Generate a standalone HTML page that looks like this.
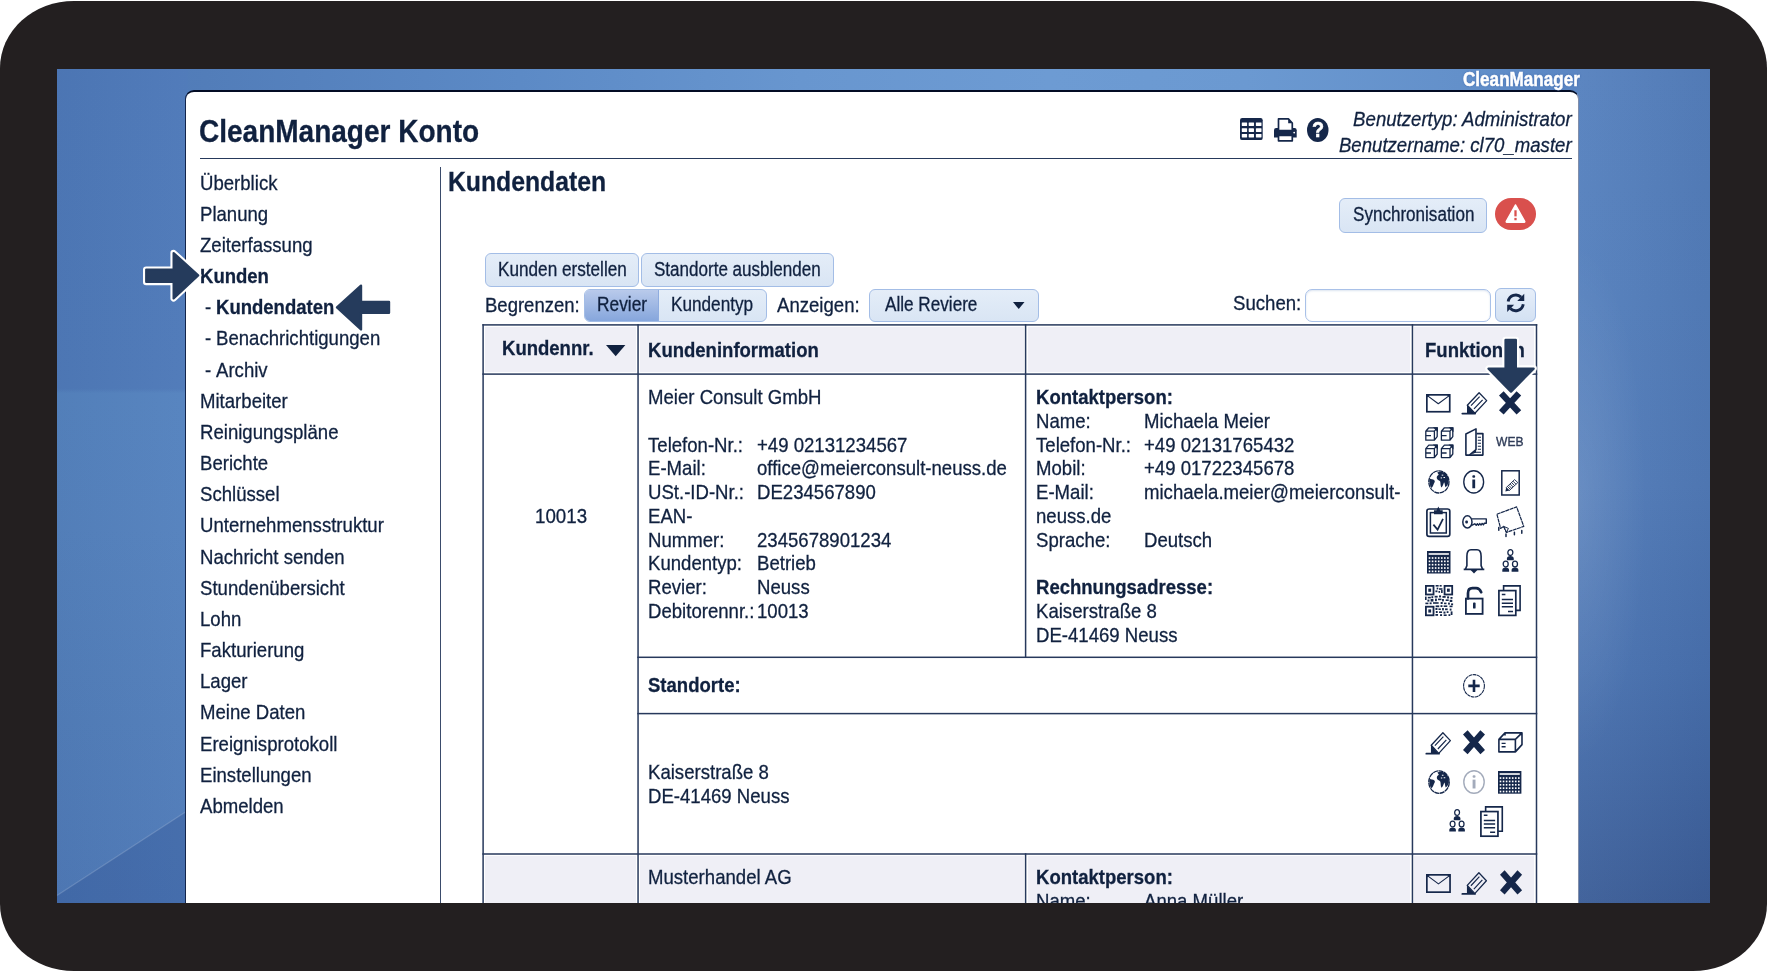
<!DOCTYPE html>
<html lang="de"><head><meta charset="utf-8"><title>CleanManager Konto - Kundendaten</title>
<style>
html,body{margin:0;padding:0;background:#fff}
body{width:1767px;height:971px;overflow:hidden;position:relative;font-family:"Liberation Sans",Arial,Helvetica,sans-serif}
.t{position:absolute;white-space:nowrap;line-height:1;letter-spacing:0;-webkit-text-stroke:.3px currentColor}
#frame{position:absolute;left:0;top:1px;width:1767px;height:970px;background:#231f20;border-radius:74px/67px}
#screen{position:absolute;left:57px;top:69px;width:1653px;height:834px;overflow:hidden;
background:linear-gradient(to right,#4d78b8 0,#527db9 9%,#5c8ac6 28%,#6896cf 45%,#6d9bd3 60%,#6b99d1 72%,#6390ca 85%,#5984c1 93%,#5580be 100%)}
#lstrip{position:absolute;left:57px;top:69px;width:131px;height:834px;background:linear-gradient(to right,rgba(0,0,0,.03),rgba(255,255,255,.02)),linear-gradient(to bottom,#4e79b9 0,#4f7ab9 38.3%,#5583bf 38.9%,#5582be 55%,#527eba 78%,#4f7ab8 100%)}
#rstrip{position:absolute;left:1576px;top:69px;width:134px;height:834px;background:radial-gradient(ellipse 70px 260px at 0 52%,rgba(255,255,255,.10),rgba(255,255,255,0)),linear-gradient(to right,rgba(255,255,255,.03),rgba(0,0,30,.06)),linear-gradient(to bottom,#5782bf 0,#5580bd 28%,#537dba 50%,#4a73b1 72%,#3d5f99 100%)}
#abs{position:absolute;left:-57px;top:-69px;width:1767px;height:971px;will-change:transform}
#panel{position:absolute;left:185px;top:90px;width:1394px;height:900px;box-sizing:border-box;background:#fff;
border-top:2px solid #030c24;border-left:1px solid #13254b;border-right:1px solid rgba(25,50,100,.55);border-radius:9px 9px 0 0}
.btn{position:absolute;box-sizing:border-box;border:1px solid #a3bde6;border-radius:6px;background:linear-gradient(#e4edf8,#d9e5f4)}
</style></head><body>
<div id="frame"></div>
<div id="screen"><div id="abs">
<div id="lstrip"></div><div id="rstrip"></div>
<svg style="position:absolute;left:57px;top:780px" width="130" height="124" viewBox="57 780 130 124"><path d="M57 895.5 L187 811 V904 H57 Z" fill="rgba(22,52,118,.20)"/><path d="M57 895.5 L187 811" stroke="rgba(255,255,255,.16)" stroke-width="1.3" fill="none"/></svg>
<div id="panel"></div>
<div class="t" style="left:1462.92px;transform-origin:0 0;top:69.59px;font-size:19.5px;font-weight:700;font-style:normal;color:#fff;transform:scaleX(0.8774);text-shadow:0 0 2px rgba(40,80,160,.9);-webkit-text-stroke:.5px #fff">CleanManager</div>
<div class="t" style="left:199.48px;transform-origin:0 0;top:115.54px;font-size:31.5px;font-weight:700;font-style:normal;color:#10213f;transform:scaleX(0.8892);">CleanManager Konto</div>
<div style="position:absolute;left:200.00px;top:158.00px;width:1371.50px;height:1.10px;box-sizing:border-box;background:#26395b"></div>
<div class="t" style="right:195.13px;transform-origin:100% 0;top:107.92px;font-size:21px;font-weight:400;font-style:italic;color:#10213f;transform:scaleX(0.8860);">Benutzertyp: Administrator</div>
<div class="t" style="right:195.12px;transform-origin:100% 0;top:133.72px;font-size:21px;font-weight:400;font-style:italic;color:#10213f;transform:scaleX(0.8860);">Benutzername: cl70_master</div>
<div style="position:absolute;left:440.00px;top:167.00px;width:1.10px;height:743.00px;box-sizing:border-box;background:#3a4b6b"></div>
<div class="t" style="left:199.60px;transform-origin:0 0;top:171.62px;font-size:21px;font-weight:400;font-style:normal;color:#10213f;transform:scaleX(0.8850);">Überblick</div>
<div class="t" style="left:199.60px;transform-origin:0 0;top:202.78px;font-size:21px;font-weight:400;font-style:normal;color:#10213f;transform:scaleX(0.8850);">Planung</div>
<div class="t" style="left:199.60px;transform-origin:0 0;top:233.94px;font-size:21px;font-weight:400;font-style:normal;color:#10213f;transform:scaleX(0.8850);">Zeiterfassung</div>
<div class="t" style="left:199.60px;transform-origin:0 0;top:265.10px;font-size:21px;font-weight:700;font-style:normal;color:#10213f;transform:scaleX(0.8820);">Kunden</div>
<div class="t" style="left:204.50px;transform-origin:0 0;top:296.26px;font-size:21px;font-weight:400;font-style:normal;color:#10213f;transform:scaleX(0.8850);">-</div>
<div class="t" style="left:215.60px;transform-origin:0 0;top:296.26px;font-size:21px;font-weight:700;font-style:normal;color:#10213f;transform:scaleX(0.8820);">Kundendaten</div>
<div class="t" style="left:204.50px;transform-origin:0 0;top:327.42px;font-size:21px;font-weight:400;font-style:normal;color:#10213f;transform:scaleX(0.8850);">-</div>
<div class="t" style="left:215.60px;transform-origin:0 0;top:327.42px;font-size:21px;font-weight:400;font-style:normal;color:#10213f;transform:scaleX(0.8850);">Benachrichtigungen</div>
<div class="t" style="left:204.50px;transform-origin:0 0;top:358.58px;font-size:21px;font-weight:400;font-style:normal;color:#10213f;transform:scaleX(0.8850);">-</div>
<div class="t" style="left:215.60px;transform-origin:0 0;top:358.58px;font-size:21px;font-weight:400;font-style:normal;color:#10213f;transform:scaleX(0.8850);">Archiv</div>
<div class="t" style="left:199.60px;transform-origin:0 0;top:389.74px;font-size:21px;font-weight:400;font-style:normal;color:#10213f;transform:scaleX(0.8850);">Mitarbeiter</div>
<div class="t" style="left:199.60px;transform-origin:0 0;top:420.90px;font-size:21px;font-weight:400;font-style:normal;color:#10213f;transform:scaleX(0.8850);">Reinigungspläne</div>
<div class="t" style="left:199.60px;transform-origin:0 0;top:452.06px;font-size:21px;font-weight:400;font-style:normal;color:#10213f;transform:scaleX(0.8850);">Berichte</div>
<div class="t" style="left:199.60px;transform-origin:0 0;top:483.22px;font-size:21px;font-weight:400;font-style:normal;color:#10213f;transform:scaleX(0.8850);">Schlüssel</div>
<div class="t" style="left:199.60px;transform-origin:0 0;top:514.38px;font-size:21px;font-weight:400;font-style:normal;color:#10213f;transform:scaleX(0.8850);">Unternehmensstruktur</div>
<div class="t" style="left:199.60px;transform-origin:0 0;top:545.54px;font-size:21px;font-weight:400;font-style:normal;color:#10213f;transform:scaleX(0.8850);">Nachricht senden</div>
<div class="t" style="left:199.60px;transform-origin:0 0;top:576.70px;font-size:21px;font-weight:400;font-style:normal;color:#10213f;transform:scaleX(0.8850);">Stundenübersicht</div>
<div class="t" style="left:199.60px;transform-origin:0 0;top:607.86px;font-size:21px;font-weight:400;font-style:normal;color:#10213f;transform:scaleX(0.8850);">Lohn</div>
<div class="t" style="left:199.60px;transform-origin:0 0;top:639.02px;font-size:21px;font-weight:400;font-style:normal;color:#10213f;transform:scaleX(0.8850);">Fakturierung</div>
<div class="t" style="left:199.60px;transform-origin:0 0;top:670.18px;font-size:21px;font-weight:400;font-style:normal;color:#10213f;transform:scaleX(0.8850);">Lager</div>
<div class="t" style="left:199.60px;transform-origin:0 0;top:701.34px;font-size:21px;font-weight:400;font-style:normal;color:#10213f;transform:scaleX(0.8850);">Meine Daten</div>
<div class="t" style="left:199.60px;transform-origin:0 0;top:732.50px;font-size:21px;font-weight:400;font-style:normal;color:#10213f;transform:scaleX(0.8850);">Ereignisprotokoll</div>
<div class="t" style="left:199.60px;transform-origin:0 0;top:763.66px;font-size:21px;font-weight:400;font-style:normal;color:#10213f;transform:scaleX(0.8850);">Einstellungen</div>
<div class="t" style="left:199.60px;transform-origin:0 0;top:794.82px;font-size:21px;font-weight:400;font-style:normal;color:#10213f;transform:scaleX(0.8850);">Abmelden</div>
<div class="t" style="left:447.99px;transform-origin:0 0;top:168.40px;font-size:28px;font-weight:700;font-style:normal;color:#10213f;transform:scaleX(0.8836);">Kundendaten</div>
<div class="btn" style="left:1339px;top:198.4px;width:148px;height:34.5px"></div>
<div class="t" style="left:1352.63px;transform-origin:0 0;top:204.99px;font-size:19.5px;font-weight:400;font-style:normal;color:#10213f;transform:scaleX(0.8749);">Synchronisation</div>
<div style="position:absolute;left:1495.00px;top:198.40px;width:41.00px;height:31.60px;box-sizing:border-box;background:#d9504d;border-radius:16px"></div>
<svg style="position:absolute;left:1504.50px;top:202.50px;overflow:visible" width="21.00" height="21.00" viewBox="0 0 24 24" preserveAspectRatio="none" ><path d="M12 2.2 L22.6 21 Q23 22 22 22 L2 22 Q1 22 1.4 21 Z" fill="#fff" stroke="#fff" stroke-width="1.5" stroke-linejoin="round"/><rect x="10.7" y="8.3" width="2.6" height="7" fill="#d9504d"/><rect x="10.7" y="17" width="2.6" height="2.7" fill="#d9504d"/></svg>
<div class="btn" style="left:485px;top:253.3px;width:153.7px;height:34px"></div>
<div class="t" style="left:497.53px;transform-origin:0 0;top:260.49px;font-size:19.5px;font-weight:400;font-style:normal;color:#10213f;transform:scaleX(0.8801);">Kunden erstellen</div>
<div class="btn" style="left:641.2px;top:253.3px;width:192.7px;height:34px"></div>
<div class="t" style="left:654.13px;transform-origin:0 0;top:260.49px;font-size:19.5px;font-weight:400;font-style:normal;color:#10213f;transform:scaleX(0.8736);">Standorte ausblenden</div>
<div class="t" style="left:484.92px;transform-origin:0 0;top:293.62px;font-size:21px;font-weight:400;font-style:normal;color:#10213f;transform:scaleX(0.8820);">Begrenzen:</div>
<div class="btn" style="left:584px;top:289px;width:182.8px;height:32.8px;overflow:hidden"><div style="position:absolute;left:0;top:0;width:73px;height:100%;background:linear-gradient(#b9caeb,#86a6dc);border-right:1px solid #8facdf"></div></div>
<div class="t" style="left:597.41px;transform-origin:0 0;top:294.89px;font-size:19.5px;font-weight:400;font-style:normal;color:#10213f;transform:scaleX(0.8880);">Revier</div>
<div class="t" style="left:671.43px;transform-origin:0 0;top:294.89px;font-size:19.5px;font-weight:400;font-style:normal;color:#10213f;transform:scaleX(0.8804);">Kundentyp</div>
<div class="t" style="left:777.00px;transform-origin:0 0;top:293.62px;font-size:21px;font-weight:400;font-style:normal;color:#10213f;transform:scaleX(0.8850);">Anzeigen:</div>
<div class="btn" style="left:869.4px;top:289px;width:170px;height:32.8px"></div>
<div class="t" style="left:885.30px;transform-origin:0 0;top:294.89px;font-size:19.5px;font-weight:400;font-style:normal;color:#10213f;transform:scaleX(0.8790);">Alle Reviere</div>
<svg style="position:absolute;left:1013.00px;top:302.30px;overflow:visible" width="11.50" height="7.10" viewBox="0 0 10 6" preserveAspectRatio="none" ><path d="M0 0H10L5 6Z" fill="#10213f"/></svg>
<div class="t" style="left:1232.86px;transform-origin:0 0;top:292.42px;font-size:21px;font-weight:400;font-style:normal;color:#10213f;transform:scaleX(0.8860);">Suchen:</div>
<div style="position:absolute;left:1304.70px;top:289.00px;width:186.60px;height:32.80px;box-sizing:border-box;background:#fff;border:1px solid #a9c1e8;border-radius:7px;box-shadow:inset 0 1px 2px rgba(120,150,200,.25)"></div>
<div class="btn" style="left:1495.4px;top:287.7px;width:41px;height:34.1px;background:linear-gradient(#e6eef9,#d3e1f3)"></div>
<div style="position:absolute;left:485.10px;top:326.90px;width:150.95px;height:45.20px;box-sizing:border-box;background:#efeff6"></div>
<div style="position:absolute;left:485.10px;top:856.00px;width:150.95px;height:76.00px;box-sizing:border-box;background:#efeff6"></div>
<div style="position:absolute;left:640.05px;top:326.90px;width:383.55px;height:45.20px;box-sizing:border-box;background:#efeff6"></div>
<div style="position:absolute;left:640.05px;top:856.00px;width:383.55px;height:76.00px;box-sizing:border-box;background:#efeff6"></div>
<div style="position:absolute;left:1027.60px;top:326.90px;width:382.85px;height:45.20px;box-sizing:border-box;background:#efeff6"></div>
<div style="position:absolute;left:1027.60px;top:856.00px;width:382.85px;height:76.00px;box-sizing:border-box;background:#efeff6"></div>
<div style="position:absolute;left:1414.45px;top:326.90px;width:120.05px;height:45.20px;box-sizing:border-box;background:#efeff6"></div>
<div style="position:absolute;left:1414.45px;top:856.00px;width:120.05px;height:76.00px;box-sizing:border-box;background:#efeff6"></div>
<svg style="position:absolute;left:0.00px;top:0.00px;overflow:visible" width="1767.00" height="971.00" viewBox="0 0 1767 971" preserveAspectRatio="none" ><g fill="#27395c"><rect x="482.35" y="324.15" width="1054.90" height="1.5"/><rect x="482.35" y="373.35" width="1054.90" height="1.5"/><rect x="637.30" y="656.55" width="899.95" height="1.5"/><rect x="637.30" y="712.85" width="899.95" height="1.5"/><rect x="482.35" y="853.25" width="1054.90" height="1.5"/><rect x="482.35" y="324.15" width="1.5" height="585.85"/><rect x="1535.75" y="324.15" width="1.5" height="585.85"/><rect x="637.30" y="324.15" width="1.5" height="585.85"/><rect x="1411.70" y="324.15" width="1.5" height="585.85"/><rect x="1024.85" y="324.15" width="1.5" height="333.15"/><rect x="1024.85" y="853.25" width="1.5" height="56.75"/></g></svg>
<div class="t" style="left:502.40px;transform-origin:0 0;top:337.02px;font-size:21px;font-weight:700;font-style:normal;color:#10213f;transform:scaleX(0.8820);">Kundennr.</div>
<svg style="position:absolute;left:606.00px;top:345.00px;overflow:visible" width="19.40" height="11.30" viewBox="0 0 10 6" preserveAspectRatio="none" ><path d="M0 0H10L5 6Z" fill="#10213f"/></svg>
<div class="t" style="left:648.30px;transform-origin:0 0;top:338.52px;font-size:21px;font-weight:700;font-style:normal;color:#10213f;transform:scaleX(0.8820);">Kundeninformation</div>
<div class="t" style="left:1424.60px;transform-origin:0 0;top:338.82px;font-size:21px;font-weight:700;font-style:normal;color:#10213f;transform:scaleX(0.8820);">Funktionen</div>
<div class="t" style="left:535.00px;transform-origin:0 0;top:504.92px;font-size:21px;font-weight:400;font-style:normal;color:#10213f;transform:scaleX(0.8916);">10013</div>
<div class="t" style="left:648.00px;transform-origin:0 0;top:386.32px;font-size:21px;font-weight:400;font-style:normal;color:#10213f;transform:scaleX(0.8850);">Meier Consult GmbH</div>
<div class="t" style="left:648.00px;transform-origin:0 0;top:433.76px;font-size:21px;font-weight:400;font-style:normal;color:#10213f;transform:scaleX(0.8850);">Telefon-Nr.:</div>
<div class="t" style="left:756.80px;transform-origin:0 0;top:433.76px;font-size:21px;font-weight:400;font-style:normal;color:#10213f;transform:scaleX(0.8850);">+49 02131234567</div>
<div class="t" style="left:648.00px;transform-origin:0 0;top:457.48px;font-size:21px;font-weight:400;font-style:normal;color:#10213f;transform:scaleX(0.8850);">E-Mail:</div>
<div class="t" style="left:756.80px;transform-origin:0 0;top:457.48px;font-size:21px;font-weight:400;font-style:normal;color:#10213f;transform:scaleX(0.8850);">office@meierconsult-neuss.de</div>
<div class="t" style="left:648.00px;transform-origin:0 0;top:481.20px;font-size:21px;font-weight:400;font-style:normal;color:#10213f;transform:scaleX(0.8850);">USt.-ID-Nr.:</div>
<div class="t" style="left:756.80px;transform-origin:0 0;top:481.20px;font-size:21px;font-weight:400;font-style:normal;color:#10213f;transform:scaleX(0.8850);">DE234567890</div>
<div class="t" style="left:648.00px;transform-origin:0 0;top:504.92px;font-size:21px;font-weight:400;font-style:normal;color:#10213f;transform:scaleX(0.8850);">EAN-</div>
<div class="t" style="left:648.00px;transform-origin:0 0;top:528.64px;font-size:21px;font-weight:400;font-style:normal;color:#10213f;transform:scaleX(0.8850);">Nummer:</div>
<div class="t" style="left:756.80px;transform-origin:0 0;top:528.64px;font-size:21px;font-weight:400;font-style:normal;color:#10213f;transform:scaleX(0.8850);">2345678901234</div>
<div class="t" style="left:648.00px;transform-origin:0 0;top:552.36px;font-size:21px;font-weight:400;font-style:normal;color:#10213f;transform:scaleX(0.8850);">Kundentyp:</div>
<div class="t" style="left:756.80px;transform-origin:0 0;top:552.36px;font-size:21px;font-weight:400;font-style:normal;color:#10213f;transform:scaleX(0.8850);">Betrieb</div>
<div class="t" style="left:648.00px;transform-origin:0 0;top:576.08px;font-size:21px;font-weight:400;font-style:normal;color:#10213f;transform:scaleX(0.8850);">Revier:</div>
<div class="t" style="left:756.80px;transform-origin:0 0;top:576.08px;font-size:21px;font-weight:400;font-style:normal;color:#10213f;transform:scaleX(0.8850);">Neuss</div>
<div class="t" style="left:648.00px;transform-origin:0 0;top:599.80px;font-size:21px;font-weight:400;font-style:normal;color:#10213f;transform:scaleX(0.8850);">Debitorennr.:</div>
<div class="t" style="left:756.80px;transform-origin:0 0;top:599.80px;font-size:21px;font-weight:400;font-style:normal;color:#10213f;transform:scaleX(0.8850);">10013</div>
<div class="t" style="left:1035.80px;transform-origin:0 0;top:386.32px;font-size:21px;font-weight:700;font-style:normal;color:#10213f;transform:scaleX(0.8820);">Kontaktperson:</div>
<div class="t" style="left:1035.80px;transform-origin:0 0;top:410.04px;font-size:21px;font-weight:400;font-style:normal;color:#10213f;transform:scaleX(0.8850);">Name:</div>
<div class="t" style="left:1144.00px;transform-origin:0 0;top:410.04px;font-size:21px;font-weight:400;font-style:normal;color:#10213f;transform:scaleX(0.8850);">Michaela Meier</div>
<div class="t" style="left:1035.80px;transform-origin:0 0;top:433.76px;font-size:21px;font-weight:400;font-style:normal;color:#10213f;transform:scaleX(0.8850);">Telefon-Nr.:</div>
<div class="t" style="left:1144.00px;transform-origin:0 0;top:433.76px;font-size:21px;font-weight:400;font-style:normal;color:#10213f;transform:scaleX(0.8850);">+49 02131765432</div>
<div class="t" style="left:1035.80px;transform-origin:0 0;top:457.48px;font-size:21px;font-weight:400;font-style:normal;color:#10213f;transform:scaleX(0.8850);">Mobil:</div>
<div class="t" style="left:1144.00px;transform-origin:0 0;top:457.48px;font-size:21px;font-weight:400;font-style:normal;color:#10213f;transform:scaleX(0.8850);">+49 01722345678</div>
<div class="t" style="left:1035.80px;transform-origin:0 0;top:481.20px;font-size:21px;font-weight:400;font-style:normal;color:#10213f;transform:scaleX(0.8850);">E-Mail:</div>
<div class="t" style="left:1144.00px;transform-origin:0 0;top:481.20px;font-size:21px;font-weight:400;font-style:normal;color:#10213f;transform:scaleX(0.8850);">michaela.meier@meierconsult-</div>
<div class="t" style="left:1035.80px;transform-origin:0 0;top:504.92px;font-size:21px;font-weight:400;font-style:normal;color:#10213f;transform:scaleX(0.8850);">neuss.de</div>
<div class="t" style="left:1035.80px;transform-origin:0 0;top:528.64px;font-size:21px;font-weight:400;font-style:normal;color:#10213f;transform:scaleX(0.8850);">Sprache:</div>
<div class="t" style="left:1144.00px;transform-origin:0 0;top:528.64px;font-size:21px;font-weight:400;font-style:normal;color:#10213f;transform:scaleX(0.8850);">Deutsch</div>
<div class="t" style="left:1035.80px;transform-origin:0 0;top:576.08px;font-size:21px;font-weight:700;font-style:normal;color:#10213f;transform:scaleX(0.8820);">Rechnungsadresse:</div>
<div class="t" style="left:1035.80px;transform-origin:0 0;top:599.80px;font-size:21px;font-weight:400;font-style:normal;color:#10213f;transform:scaleX(0.8850);">Kaiserstraße 8</div>
<div class="t" style="left:1035.80px;transform-origin:0 0;top:623.52px;font-size:21px;font-weight:400;font-style:normal;color:#10213f;transform:scaleX(0.8850);">DE-41469 Neuss</div>
<div class="t" style="left:648.00px;transform-origin:0 0;top:674.12px;font-size:21px;font-weight:700;font-style:normal;color:#10213f;transform:scaleX(0.8820);">Standorte:</div>
<div class="t" style="left:648.00px;transform-origin:0 0;top:761.02px;font-size:21px;font-weight:400;font-style:normal;color:#10213f;transform:scaleX(0.8850);">Kaiserstraße 8</div>
<div class="t" style="left:648.00px;transform-origin:0 0;top:784.82px;font-size:21px;font-weight:400;font-style:normal;color:#10213f;transform:scaleX(0.8850);">DE-41469 Neuss</div>
<div class="t" style="left:648.00px;transform-origin:0 0;top:865.82px;font-size:21px;font-weight:400;font-style:normal;color:#10213f;transform:scaleX(0.8850);">Musterhandel AG</div>
<div class="t" style="left:1035.80px;transform-origin:0 0;top:865.82px;font-size:21px;font-weight:700;font-style:normal;color:#10213f;transform:scaleX(0.8820);">Kontaktperson:</div>
<div class="t" style="left:1035.80px;transform-origin:0 0;top:889.62px;font-size:21px;font-weight:400;font-style:normal;color:#10213f;transform:scaleX(0.8850);">Name:</div>
<div class="t" style="left:1144.00px;transform-origin:0 0;top:889.62px;font-size:21px;font-weight:400;font-style:normal;color:#10213f;transform:scaleX(0.8850);">Anna Müller</div>
<svg style="position:absolute;left:1240.30px;top:118.10px;overflow:visible" width="22.70" height="22.10" viewBox="0 0 22.7 22.1" preserveAspectRatio="none" ><rect x="0" y="0" width="22.7" height="22.1" rx="2.2" fill="#15274a"/><rect x="1.8" y="4.4" width="5.3" height="3.6" rx="0.4" fill="#fff"/><rect x="1.8" y="10.3" width="5.3" height="3.6" rx="0.4" fill="#fff"/><rect x="1.8" y="15.9" width="5.3" height="3.6" rx="0.4" fill="#fff"/><rect x="8.7" y="4.4" width="5.3" height="3.6" rx="0.4" fill="#fff"/><rect x="8.7" y="10.3" width="5.3" height="3.6" rx="0.4" fill="#fff"/><rect x="8.7" y="15.9" width="5.3" height="3.6" rx="0.4" fill="#fff"/><rect x="15.9" y="4.4" width="5.6" height="3.6" rx="0.4" fill="#fff"/><rect x="15.9" y="10.3" width="5.6" height="3.6" rx="0.4" fill="#fff"/><rect x="15.9" y="15.9" width="5.6" height="3.6" rx="0.4" fill="#fff"/></svg>
<svg style="position:absolute;left:1273.90px;top:118.40px;overflow:visible" width="22.70" height="23.70" viewBox="0 0 22.7 23.7" preserveAspectRatio="none" ><path d="M0 19.6 V12.2 Q0 10 2.2 10 H20.5 Q22.7 10 22.7 12.2 V19.6 Z" fill="#15274a"/><path d="M4.5 12.6 V0.9 H14.4 L18.3 5 V12.6 Z" fill="#fff" stroke="#15274a" stroke-width="1.7" stroke-linejoin="round"/><path d="M14.2 0.9 V5.2 H18.3 Z" fill="#15274a"/><rect x="4.5" y="17.4" width="13.8" height="5.4" fill="#fff" stroke="#15274a" stroke-width="1.7" stroke-linejoin="round"/><circle cx="20.2" cy="14.6" r="0.9" fill="#fff"/></svg>
<svg style="position:absolute;left:1307.20px;top:118.10px;overflow:visible" width="21.50" height="24.00" viewBox="0 0 21.50 24.00" preserveAspectRatio="none" ><ellipse cx="10.75" cy="12.00" rx="10.75" ry="12.00" fill="#15274a"/></svg>
<div class="t" style="left:1312.11px;transform-origin:0 0;top:119.94px;font-size:21.5px;font-weight:700;font-style:normal;color:#fff;transform:scaleX(0.9216);-webkit-text-stroke:.5px #fff">?</div>
<svg style="position:absolute;left:1505.70px;top:293.30px;overflow:visible" width="19.40" height="19.70" viewBox="0 0 20 20" preserveAspectRatio="none" ><path d="M2.2 8.6 A8 8 0 0 1 15.6 4.2" fill="none" stroke="#15274a" stroke-width="3" /><path d="M18.8 0.8 V8 H11.6 Z" fill="#15274a"/><path d="M17.8 11.4 A8 8 0 0 1 4.4 15.8" fill="none" stroke="#15274a" stroke-width="3" /><path d="M1.2 19.2 V12 H8.4 Z" fill="#15274a"/></svg>
<svg style="position:absolute;left:1426.40px;top:394.30px;overflow:visible" width="24.60" height="18.60" viewBox="0 0 24.60 18.60" preserveAspectRatio="none" ><rect x="0.85" y="0.85" width="22.90" height="16.90" fill="none" stroke="#15274a" stroke-width="1.7" /><path d="M1 1.4 L12.30 9.67 L23.60 1.4" fill="none" stroke="#15274a" stroke-width="1.15" stroke-linejoin='round'/><path d="M0.8 0.8h3.2l-3.2 2.6z M23.80 0.8h-3.2l3.2 2.6z" fill="#15274a"/></svg>
<svg style="position:absolute;left:1461.70px;top:392.30px;overflow:visible" width="25.40" height="22.60" viewBox="0 0 25.4 22.6" preserveAspectRatio="none" ><path d="M17.1 0.7 L24.7 8.6 L12.9 21.3 L5.3 13.2 Z" fill="none" stroke="#15274a" stroke-width="1.3" stroke-linejoin='round'/><path d="M17.6 4.6 L9.0 13.6 M20.6 7.8 L12.0 16.9" fill="none" stroke="#15274a" stroke-width="1.2" /><path d="M5.0 13.0 L12.9 21.6 L5.0 21.6 Z" fill="#15274a"/><path d="M0.3 21.6 H13.2" fill="none" stroke="#15274a" stroke-width="1.7" stroke-linecap='round'/></svg>
<svg style="position:absolute;left:1499.40px;top:391.10px;overflow:visible" width="22.20" height="23.80" viewBox="0 0 22 24" preserveAspectRatio="none" ><path d="M2.3 2.4 L19.7 21.6 M19.7 2.4 L2.3 21.6" fill="none" stroke="#15274a" stroke-width="6.2" /></svg>
<svg style="position:absolute;left:1424.70px;top:426.70px;overflow:visible" width="28.30" height="31.40" viewBox="0 0 28.3 31.4" preserveAspectRatio="none" ><path d="M0.8 4.2 h8.6 v9 h-8.6 z M0.8 4.2 l3 -3.4 h8.4 l-2.8 3.4 M12.2 0.8 v8.8 l-2.8 3.6" fill="none" stroke="#15274a" stroke-width="1.3" stroke-linejoin='round'/><path d="M0.8 8.6 h5.2 M9.6 0.9 l2.6 0 l0 2.6 z" fill="none" stroke="#15274a" stroke-width="1.4" /><path d="M16.4 4.2 h8.6 v9 h-8.6 z M16.4 4.2 l3 -3.4 h8.4 l-2.8 3.4 M27.799999999999997 0.8 v8.8 l-2.8 3.6" fill="none" stroke="#15274a" stroke-width="1.3" stroke-linejoin='round'/><path d="M16.4 8.6 h5.2 M25.2 0.9 l2.6 0 l0 2.6 z" fill="none" stroke="#15274a" stroke-width="1.4" /><path d="M0.8 21.599999999999998 h8.6 v9 h-8.6 z M0.8 21.599999999999998 l3 -3.4 h8.4 l-2.8 3.4 M12.2 18.2 v8.8 l-2.8 3.6" fill="none" stroke="#15274a" stroke-width="1.3" stroke-linejoin='round'/><path d="M0.8 26.0 h5.2 M9.6 18.299999999999997 l2.6 0 l0 2.6 z" fill="none" stroke="#15274a" stroke-width="1.4" /><path d="M16.4 21.599999999999998 h8.6 v9 h-8.6 z M16.4 21.599999999999998 l3 -3.4 h8.4 l-2.8 3.4 M27.799999999999997 18.2 v8.8 l-2.8 3.6" fill="none" stroke="#15274a" stroke-width="1.3" stroke-linejoin='round'/><path d="M16.4 26.0 h5.2 M25.2 18.299999999999997 l2.6 0 l0 2.6 z" fill="none" stroke="#15274a" stroke-width="1.4" /></svg>
<svg style="position:absolute;left:1464.90px;top:428.30px;overflow:visible" width="18.80" height="28.00" viewBox="0 0 18.8 28" preserveAspectRatio="none" ><path d="M0.9 6.0 L11.0 0.9 V21.6 L4.4 27.1 H0.9 Z" fill="none" stroke="#15274a" stroke-width="1.6" stroke-linejoin='round'/><path d="M11.6 5.6 H17.9 V27.1 H4.4" fill="none" stroke="#15274a" stroke-width="1.6" stroke-linejoin='round'/><path d="M12.8 9.2h3.2M12.8 12.2h3.2M12.8 15.2h3.2M12.8 18.2h3.2M12.8 21.2h3.2M9.4 24.2h6.6" fill="none" stroke="#15274a" stroke-width="1.1" /><path d="M11 21 L11 24.4 L6.6 26.4 Z" fill="#15274a"/></svg>
<div class="t" style="left:1496.34px;transform-origin:0 0;top:435.90px;font-size:12.4px;font-weight:400;font-style:normal;color:#2f3c58;transform:scaleX(0.9736);-webkit-text-stroke:.35px #2f3c58">WEB</div>
<svg style="position:absolute;left:1427.60px;top:470.00px;overflow:visible" width="21.80" height="23.80" viewBox="0 0 22 24" preserveAspectRatio="none" ><ellipse cx="11" cy="12" rx="10.2" ry="11.2" fill="none" stroke="#15274a" stroke-width="1.3" stroke-dasharray='5 0.5'/><path d="M1.6 8.6 C3 9.4 5 9 6.4 10.4 C7.6 11.8 6.2 13 5.6 14.6 C5 16.2 4.2 17.8 3.4 18.2 C1.6 15.6 0.9 11.6 1.6 8.6 Z" fill="#15274a"/><path d="M9.4 2.6 C11 1.4 15 1.2 17.6 3.4 C20.2 5.8 21.2 9 20.8 12.6 C20.2 14.6 18.8 16.8 17.6 17.4 C16.8 15.4 17.2 13.6 16.2 12.4 C15.4 14.6 14.6 17 13.4 17.6 C12.4 15.6 12.8 13 12.2 11.4 C11 10.2 9 9.8 8.8 8 C8.6 6 10.2 5.6 10.8 4.6 C10.4 3.8 9.6 3.4 9.4 2.6 Z" fill="#15274a"/><path d="M13.8 5.2h1.6M15.6 7.6h1.6M12.8 8h1.4" stroke="#fff" stroke-width="1"/></svg>
<svg style="position:absolute;left:1463.30px;top:470.00px;overflow:visible" width="21.40" height="23.80" viewBox="0 0 22 24" preserveAspectRatio="none" ><ellipse cx="11" cy="12" rx="10.2" ry="11.2" fill="none" stroke="#15274a" stroke-width="1.4" /><rect x="9.6" y="9.6" width="2.9" height="8.8" fill="#15274a"/><rect x="9.6" y="5.2" width="2.9" height="2.6" rx="1" fill="#15274a"/></svg>
<svg style="position:absolute;left:1501.00px;top:470.00px;overflow:visible" width="19.00" height="25.80" viewBox="0 0 19 25.8" preserveAspectRatio="none" ><rect x="0.8" y="0.8" width="17.4" height="24.2" fill="none" stroke="#15274a" stroke-width="1.5" /><path d="M13.6 9.6 L16.8 12.6 L8.2 20.6 L5.2 17.6 Z" fill="none" stroke="#15274a" stroke-width="0.9"/><path d="M12 11.2l3 3M10.6 12.6l3 3M9.2 14l3 3M7.8 15.4l3 3M6.6 16.6l3 3" stroke="#15274a" stroke-width="0.9"/><path d="M5.2 17.4 L8.4 20.6 L4.4 21.6 Z" fill="#15274a"/></svg>
<svg style="position:absolute;left:1426.30px;top:505.90px;overflow:visible" width="24.70" height="31.30" viewBox="0 0 24.7 31.3" preserveAspectRatio="none" ><rect x="0.9" y="3.0" width="22.9" height="27.4" rx="2.2" fill="none" stroke="#15274a" stroke-width="1.7" /><rect x="4.4" y="6.6" width="15.9" height="20.4" fill="none" stroke="#15274a" stroke-width="1.5" /><path d="M8 8.2 V4.2 H10.6 L12.35 0.6 L14.1 4.2 H16.7 V8.2 Z" fill="#15274a"/><path d="M7.4 18.6 L11.6 23.6 L17 12.8" fill="none" stroke="#15274a" stroke-width="1.7" /></svg>
<svg style="position:absolute;left:1461.70px;top:514.60px;overflow:visible" width="25.00" height="13.90" viewBox="0 0 25 13.9" preserveAspectRatio="none" ><ellipse cx="5.4" cy="6.9" rx="4.6" ry="6.1" fill="none" stroke="#15274a" stroke-width="1.5" /><rect x="3.3" y="5.4" width="2.6" height="3.2" rx="1" fill="#15274a"/><path d="M9.6 3.9 H24.3 V8.2 H22.4 L21.4 9.8 L20.2 8.4 L19 10 L17.8 8.6 L16.6 10.2 L15.4 8.8 L14.2 10.2 L12.8 8.8 L9.6 10.4" fill="none" stroke="#15274a" stroke-width="1.4" stroke-linejoin='round'/></svg>
<svg style="position:absolute;left:1496.20px;top:505.90px;overflow:visible" width="28.60" height="31.30" viewBox="0 0 28.6 31.3" preserveAspectRatio="none" ><path d="M0.9 8.2 L20.6 0.9 L27.8 20.4 L10.4 26.4 L7.6 20.4 L4.6 22.4 Z" fill="none" stroke="#15274a" stroke-width="1.2" stroke-dasharray='4 0.5' stroke-linejoin='round'/><path d="M7.6 20.4 L10.4 26.4 L12.4 22.4 Z" fill="none" stroke="#15274a" stroke-width="1.0" /><path d="M2.8 21.4v2.8M10 28v2.6M18.4 26.2v2.6M25.8 24.6v2.6" fill="none" stroke="#15274a" stroke-width="1.5" stroke-linecap='round'/></svg>
<svg style="position:absolute;left:1426.50px;top:550.70px;overflow:visible" width="23.50" height="22.50" viewBox="0 0 23.4 22.6" preserveAspectRatio="none" ><rect x="0" y="0" width="23.4" height="22.6" fill="#15274a"/><rect x="1.6" y="2.2" width="20.2" height="1.6" fill="#fff"/><rect x="1.70" y="6.20" width="1.6" height="1.7" fill="#fff"/><rect x="4.75" y="6.20" width="1.6" height="1.7" fill="#fff"/><rect x="7.80" y="6.20" width="1.6" height="1.7" fill="#fff"/><rect x="10.85" y="6.20" width="1.6" height="1.7" fill="#fff"/><rect x="13.90" y="6.20" width="1.6" height="1.7" fill="#fff"/><rect x="16.95" y="6.20" width="1.6" height="1.7" fill="#fff"/><rect x="20.00" y="6.20" width="1.6" height="1.7" fill="#fff"/><rect x="1.70" y="9.55" width="1.6" height="1.7" fill="#fff"/><rect x="4.75" y="9.55" width="1.6" height="1.7" fill="#fff"/><rect x="7.80" y="9.55" width="1.6" height="1.7" fill="#fff"/><rect x="10.85" y="9.55" width="1.6" height="1.7" fill="#fff"/><rect x="13.90" y="9.55" width="1.6" height="1.7" fill="#fff"/><rect x="16.95" y="9.55" width="1.6" height="1.7" fill="#fff"/><rect x="20.00" y="9.55" width="1.6" height="1.7" fill="#fff"/><rect x="1.70" y="12.90" width="1.6" height="1.7" fill="#fff"/><rect x="4.75" y="12.90" width="1.6" height="1.7" fill="#fff"/><rect x="7.80" y="12.90" width="1.6" height="1.7" fill="#fff"/><rect x="10.85" y="12.90" width="1.6" height="1.7" fill="#fff"/><rect x="13.90" y="12.90" width="1.6" height="1.7" fill="#fff"/><rect x="16.95" y="12.90" width="1.6" height="1.7" fill="#fff"/><rect x="20.00" y="12.90" width="1.6" height="1.7" fill="#fff"/><rect x="1.70" y="16.25" width="1.6" height="1.7" fill="#fff"/><rect x="4.75" y="16.25" width="1.6" height="1.7" fill="#fff"/><rect x="7.80" y="16.25" width="1.6" height="1.7" fill="#fff"/><rect x="10.85" y="16.25" width="1.6" height="1.7" fill="#fff"/><rect x="13.90" y="16.25" width="1.6" height="1.7" fill="#fff"/><rect x="16.95" y="16.25" width="1.6" height="1.7" fill="#fff"/><rect x="20.00" y="16.25" width="1.6" height="1.7" fill="#fff"/><rect x="1.70" y="19.60" width="1.6" height="1.7" fill="#fff"/><rect x="4.75" y="19.60" width="1.6" height="1.7" fill="#fff"/><rect x="7.80" y="19.60" width="1.6" height="1.7" fill="#fff"/><rect x="10.85" y="19.60" width="1.6" height="1.7" fill="#fff"/><rect x="13.90" y="19.60" width="1.6" height="1.7" fill="#fff"/><rect x="16.95" y="19.60" width="1.6" height="1.7" fill="#fff"/><rect x="20.00" y="19.60" width="1.6" height="1.7" fill="#fff"/></svg>
<svg style="position:absolute;left:1463.20px;top:548.80px;overflow:visible" width="22.00" height="24.60" viewBox="0 0 22 24.6" preserveAspectRatio="none" ><path d="M0.7 20.4 H21.3 M2.4 20.2 L3.9 16.6 V7.2 Q3.9 0.8 8 0.8 H14 Q18.1 0.8 18.1 7.2 V16.6 L19.6 20.2" fill="none" stroke="#15274a" stroke-width="1.6" stroke-linejoin='round'/><path d="M7.6 21 H14.4 L11 24.4 Z" fill="#15274a"/></svg>
<svg style="position:absolute;left:1502.20px;top:548.80px;overflow:visible" width="16.70" height="22.70" viewBox="0 0 16.7 22.7" preserveAspectRatio="none" ><ellipse cx="8.35" cy="3.6" rx="2.5" ry="2.9" fill="none" stroke="#15274a" stroke-width="1.3" /><path d="M4.949999999999999 11.2 V9.6 Q4.949999999999999 7.0 8.35 7.0 Q11.75 7.0 11.75 9.6 V11.2 Z" fill="#15274a"/><ellipse cx="3.7" cy="15.1" rx="2.5" ry="2.9" fill="none" stroke="#15274a" stroke-width="1.3" /><path d="M0.30000000000000027 22.7 V21.1 Q0.30000000000000027 18.5 3.7 18.5 Q7.1 18.5 7.1 21.1 V22.7 Z" fill="#15274a"/><ellipse cx="13.0" cy="15.1" rx="2.5" ry="2.9" fill="none" stroke="#15274a" stroke-width="1.3" /><path d="M9.6 22.7 V21.1 Q9.6 18.5 13.0 18.5 Q16.4 18.5 16.4 21.1 V22.7 Z" fill="#15274a"/></svg>
<svg style="position:absolute;left:1424.90px;top:585.20px;overflow:visible" width="28.10" height="31.30" viewBox="0 0 28 31.3" preserveAspectRatio="none" ><rect x="0.9" y="0.9" width="7.6" height="8.6" fill="none" stroke="#15274a" stroke-width="1.8" /><rect x="3.3" y="3.6" width="2.8" height="3.2" fill="#15274a"/><rect x="19.5" y="0.9" width="7.6" height="8.6" fill="none" stroke="#15274a" stroke-width="1.8" /><rect x="21.900000000000002" y="3.6" width="2.8" height="3.2" fill="#15274a"/><rect x="0.9" y="21.7" width="7.6" height="8.6" fill="none" stroke="#15274a" stroke-width="1.8" /><rect x="3.3" y="24.400000000000002" width="2.8" height="3.2" fill="#15274a"/><rect x="10.6" y="0" width="3" height="1.6" fill="#15274a"/><rect x="14.6" y="0" width="2" height="1.6" fill="#15274a"/><rect x="11.6" y="2.6" width="1.6" height="1.8" fill="#15274a"/><rect x="14" y="3.2" width="3.4" height="1.6" fill="#15274a"/><rect x="10.4" y="5.4" width="2" height="1.8" fill="#15274a"/><rect x="13.4" y="6" width="1.6" height="1.8" fill="#15274a"/><rect x="16" y="5" width="1.6" height="3" fill="#15274a"/><rect x="0" y="11.6" width="1.6" height="3.4" fill="#15274a"/><rect x="2.8" y="11.8" width="3" height="1.6" fill="#15274a"/><rect x="6.4" y="11.2" width="1.8" height="2" fill="#15274a"/><rect x="9.6" y="10.8" width="3" height="1.8" fill="#15274a"/><rect x="14" y="10.4" width="2" height="2" fill="#15274a"/><rect x="17.4" y="11" width="3.2" height="1.8" fill="#15274a"/><rect x="22" y="11.4" width="2" height="2" fill="#15274a"/><rect x="25.4" y="12" width="2" height="1.8" fill="#15274a"/><rect x="2.4" y="14.6" width="2" height="2" fill="#15274a"/><rect x="5.6" y="14" width="2.8" height="2.6" fill="#15274a"/><rect x="10" y="13.6" width="1.8" height="2.6" fill="#15274a"/><rect x="13" y="13.6" width="3.4" height="1.6" fill="#15274a"/><rect x="17" y="14" width="1.8" height="2.4" fill="#15274a"/><rect x="20.6" y="14.4" width="3" height="1.6" fill="#15274a"/><rect x="24.6" y="14.8" width="2.6" height="2.2" fill="#15274a"/><rect x="0.4" y="17.6" width="3" height="1.6" fill="#15274a"/><rect x="4.6" y="17.4" width="2" height="1.8" fill="#15274a"/><rect x="8" y="17.2" width="5.6" height="1.6" fill="#15274a"/><rect x="15.6" y="17" width="2" height="2" fill="#15274a"/><rect x="19" y="17.6" width="2.4" height="1.6" fill="#15274a"/><rect x="23" y="17.6" width="1.8" height="2" fill="#15274a"/><rect x="26" y="18.4" width="2" height="1.8" fill="#15274a"/><rect x="10.6" y="20.4" width="3.6" height="1.8" fill="#15274a"/><rect x="15.4" y="20.2" width="2" height="1.8" fill="#15274a"/><rect x="18.6" y="20.4" width="3.6" height="1.6" fill="#15274a"/><rect x="24.4" y="20.6" width="3" height="1.6" fill="#15274a"/><rect x="10.4" y="23" width="2" height="2" fill="#15274a"/><rect x="13.4" y="23.4" width="2.4" height="1.6" fill="#15274a"/><rect x="17" y="23" width="1.8" height="2.4" fill="#15274a"/><rect x="20" y="23.4" width="2.6" height="1.8" fill="#15274a"/><rect x="24.6" y="23.6" width="1.8" height="2" fill="#15274a"/><rect x="10.8" y="26" width="1.8" height="2" fill="#15274a"/><rect x="14" y="26.4" width="3" height="1.6" fill="#15274a"/><rect x="18.4" y="26.6" width="2" height="2" fill="#15274a"/><rect x="21.6" y="26.2" width="1.8" height="1.8" fill="#15274a"/><rect x="25.6" y="26.4" width="1.8" height="3.6" fill="#15274a"/><rect x="10.4" y="29" width="2.6" height="1.8" fill="#15274a"/><rect x="15" y="29.2" width="2" height="1.8" fill="#15274a"/><rect x="18.6" y="29.4" width="3" height="1.6" fill="#15274a"/><rect x="23.4" y="29.2" width="1.8" height="1.8" fill="#15274a"/></svg>
<svg style="position:absolute;left:1464.80px;top:586.80px;overflow:visible" width="18.50" height="27.80" viewBox="0 0 18.5 27.8" preserveAspectRatio="none" ><path d="M3.0 11.4 V6.2 Q3.0 1.1 7.4 1.1 H11.2 Q14.4 1.1 16.2 5.2" fill="none" stroke="#15274a" stroke-width="2.7" stroke-linecap='round'/><rect x="0.9" y="11.6" width="16.7" height="15.3" fill="none" stroke="#15274a" stroke-width="1.8" /><rect x="8.0" y="15.6" width="2.6" height="6" rx="0.9" fill="#15274a"/></svg>
<svg style="position:absolute;left:1498.20px;top:585.20px;overflow:visible" width="23.00" height="31.30" viewBox="0 0 23 31.3" preserveAspectRatio="none" ><path d="M5.6 5.4 V0.9 H22.1 V25.4 H18" fill="none" stroke="#15274a" stroke-width="1.6" /><rect x="0.9" y="5.6" width="16.9" height="24.8" fill="#fff" stroke="#15274a" stroke-width="1.7"/><path d="M3.8 9.4h3.6 M3.8 14.6h11.2 M3.8 18.2h11.2 M3.8 21.8h11.2 M10 26.4h5" fill="none" stroke="#15274a" stroke-width="1.5" /></svg>
<svg style="position:absolute;left:1463.20px;top:674.00px;overflow:visible" width="22.00" height="23.60" viewBox="0 0 22 23.6" preserveAspectRatio="none" ><ellipse cx="11" cy="11.8" rx="10.4" ry="11.2" fill="none" stroke="#15274a" stroke-width="1.1" stroke-dasharray='3.6 0.5'/><path d="M5.3 11.9 H16.7 M11 5.8 V18.1" fill="none" stroke="#15274a" stroke-width="2.6" /></svg>
<svg style="position:absolute;left:1426.30px;top:731.70px;overflow:visible" width="25.10" height="22.70" viewBox="0 0 25.4 22.6" preserveAspectRatio="none" ><path d="M17.1 0.7 L24.7 8.6 L12.9 21.3 L5.3 13.2 Z" fill="none" stroke="#15274a" stroke-width="1.3" stroke-linejoin='round'/><path d="M17.6 4.6 L9.0 13.6 M20.6 7.8 L12.0 16.9" fill="none" stroke="#15274a" stroke-width="1.2" /><path d="M5.0 13.0 L12.9 21.6 L5.0 21.6 Z" fill="#15274a"/><path d="M0.3 21.6 H13.2" fill="none" stroke="#15274a" stroke-width="1.7" stroke-linecap='round'/></svg>
<svg style="position:absolute;left:1463.20px;top:729.80px;overflow:visible" width="22.00" height="24.60" viewBox="0 0 22 24" preserveAspectRatio="none" ><path d="M2.3 2.4 L19.7 21.6 M19.7 2.4 L2.3 21.6" fill="none" stroke="#15274a" stroke-width="6.2" /></svg>
<svg style="position:absolute;left:1498.00px;top:731.70px;overflow:visible" width="24.90" height="20.80" viewBox="0 0 24.9 20.8" preserveAspectRatio="none" ><path d="M0.9 7.4 H17.4 V19.9 H0.9 Z M0.9 7.4 L7 0.9 H24 L17.4 7.4 M24 0.9 V12.6 L17.4 19.9 M7 0.9 V3.4" fill="none" stroke="#15274a" stroke-width="1.6" stroke-linejoin='round'/><path d="M3.6 11.4h4 M3.6 14.8h4" fill="none" stroke="#15274a" stroke-width="1.4" /><path d="M21.4 1h2.6v2.8z" fill="#15274a"/></svg>
<svg style="position:absolute;left:1427.70px;top:769.70px;overflow:visible" width="22.10" height="24.10" viewBox="0 0 22 24" preserveAspectRatio="none" ><ellipse cx="11" cy="12" rx="10.2" ry="11.2" fill="none" stroke="#15274a" stroke-width="1.3" stroke-dasharray='5 0.5'/><path d="M1.6 8.6 C3 9.4 5 9 6.4 10.4 C7.6 11.8 6.2 13 5.6 14.6 C5 16.2 4.2 17.8 3.4 18.2 C1.6 15.6 0.9 11.6 1.6 8.6 Z" fill="#15274a"/><path d="M9.4 2.6 C11 1.4 15 1.2 17.6 3.4 C20.2 5.8 21.2 9 20.8 12.6 C20.2 14.6 18.8 16.8 17.6 17.4 C16.8 15.4 17.2 13.6 16.2 12.4 C15.4 14.6 14.6 17 13.4 17.6 C12.4 15.6 12.8 13 12.2 11.4 C11 10.2 9 9.8 8.8 8 C8.6 6 10.2 5.6 10.8 4.6 C10.4 3.8 9.6 3.4 9.4 2.6 Z" fill="#15274a"/><path d="M13.8 5.2h1.6M15.6 7.6h1.6M12.8 8h1.4" stroke="#fff" stroke-width="1"/></svg>
<svg style="position:absolute;left:1463.20px;top:769.70px;overflow:visible" width="22.00" height="24.10" viewBox="0 0 22 24" preserveAspectRatio="none" ><ellipse cx="11" cy="12" rx="10.2" ry="11.2" fill="none" stroke="#a3abbb" stroke-width="1.4" /><rect x="9.6" y="9.6" width="2.9" height="8.8" fill="#a3abbb"/><rect x="9.6" y="5.2" width="2.9" height="2.6" rx="1" fill="#a3abbb"/></svg>
<svg style="position:absolute;left:1498.00px;top:771.30px;overflow:visible" width="23.40" height="22.70" viewBox="0 0 23.4 22.6" preserveAspectRatio="none" ><rect x="0" y="0" width="23.4" height="22.6" fill="#15274a"/><rect x="1.6" y="2.2" width="20.2" height="1.6" fill="#fff"/><rect x="1.70" y="6.20" width="1.6" height="1.7" fill="#fff"/><rect x="4.75" y="6.20" width="1.6" height="1.7" fill="#fff"/><rect x="7.80" y="6.20" width="1.6" height="1.7" fill="#fff"/><rect x="10.85" y="6.20" width="1.6" height="1.7" fill="#fff"/><rect x="13.90" y="6.20" width="1.6" height="1.7" fill="#fff"/><rect x="16.95" y="6.20" width="1.6" height="1.7" fill="#fff"/><rect x="20.00" y="6.20" width="1.6" height="1.7" fill="#fff"/><rect x="1.70" y="9.55" width="1.6" height="1.7" fill="#fff"/><rect x="4.75" y="9.55" width="1.6" height="1.7" fill="#fff"/><rect x="7.80" y="9.55" width="1.6" height="1.7" fill="#fff"/><rect x="10.85" y="9.55" width="1.6" height="1.7" fill="#fff"/><rect x="13.90" y="9.55" width="1.6" height="1.7" fill="#fff"/><rect x="16.95" y="9.55" width="1.6" height="1.7" fill="#fff"/><rect x="20.00" y="9.55" width="1.6" height="1.7" fill="#fff"/><rect x="1.70" y="12.90" width="1.6" height="1.7" fill="#fff"/><rect x="4.75" y="12.90" width="1.6" height="1.7" fill="#fff"/><rect x="7.80" y="12.90" width="1.6" height="1.7" fill="#fff"/><rect x="10.85" y="12.90" width="1.6" height="1.7" fill="#fff"/><rect x="13.90" y="12.90" width="1.6" height="1.7" fill="#fff"/><rect x="16.95" y="12.90" width="1.6" height="1.7" fill="#fff"/><rect x="20.00" y="12.90" width="1.6" height="1.7" fill="#fff"/><rect x="1.70" y="16.25" width="1.6" height="1.7" fill="#fff"/><rect x="4.75" y="16.25" width="1.6" height="1.7" fill="#fff"/><rect x="7.80" y="16.25" width="1.6" height="1.7" fill="#fff"/><rect x="10.85" y="16.25" width="1.6" height="1.7" fill="#fff"/><rect x="13.90" y="16.25" width="1.6" height="1.7" fill="#fff"/><rect x="16.95" y="16.25" width="1.6" height="1.7" fill="#fff"/><rect x="20.00" y="16.25" width="1.6" height="1.7" fill="#fff"/><rect x="1.70" y="19.60" width="1.6" height="1.7" fill="#fff"/><rect x="4.75" y="19.60" width="1.6" height="1.7" fill="#fff"/><rect x="7.80" y="19.60" width="1.6" height="1.7" fill="#fff"/><rect x="10.85" y="19.60" width="1.6" height="1.7" fill="#fff"/><rect x="13.90" y="19.60" width="1.6" height="1.7" fill="#fff"/><rect x="16.95" y="19.60" width="1.6" height="1.7" fill="#fff"/><rect x="20.00" y="19.60" width="1.6" height="1.7" fill="#fff"/></svg>
<svg style="position:absolute;left:1448.60px;top:809.20px;overflow:visible" width="16.20" height="22.60" viewBox="0 0 16.7 22.7" preserveAspectRatio="none" ><ellipse cx="8.35" cy="3.6" rx="2.5" ry="2.9" fill="none" stroke="#15274a" stroke-width="1.3" /><path d="M4.949999999999999 11.2 V9.6 Q4.949999999999999 7.0 8.35 7.0 Q11.75 7.0 11.75 9.6 V11.2 Z" fill="#15274a"/><ellipse cx="3.7" cy="15.1" rx="2.5" ry="2.9" fill="none" stroke="#15274a" stroke-width="1.3" /><path d="M0.30000000000000027 22.7 V21.1 Q0.30000000000000027 18.5 3.7 18.5 Q7.1 18.5 7.1 21.1 V22.7 Z" fill="#15274a"/><ellipse cx="13.0" cy="15.1" rx="2.5" ry="2.9" fill="none" stroke="#15274a" stroke-width="1.3" /><path d="M9.6 22.7 V21.1 Q9.6 18.5 13.0 18.5 Q16.4 18.5 16.4 21.1 V22.7 Z" fill="#15274a"/></svg>
<svg style="position:absolute;left:1480.30px;top:805.80px;overflow:visible" width="23.20" height="31.10" viewBox="0 0 23 31.3" preserveAspectRatio="none" ><path d="M5.6 5.4 V0.9 H22.1 V25.4 H18" fill="none" stroke="#15274a" stroke-width="1.6" /><rect x="0.9" y="5.6" width="16.9" height="24.8" fill="#fff" stroke="#15274a" stroke-width="1.7"/><path d="M3.8 9.4h3.6 M3.8 14.6h11.2 M3.8 18.2h11.2 M3.8 21.8h11.2 M10 26.4h5" fill="none" stroke="#15274a" stroke-width="1.5" /></svg>
<svg style="position:absolute;left:1426.30px;top:874.00px;overflow:visible" width="24.90" height="19.00" viewBox="0 0 24.90 19.00" preserveAspectRatio="none" ><rect x="0.85" y="0.85" width="23.20" height="17.30" fill="none" stroke="#15274a" stroke-width="1.7" /><path d="M1 1.4 L12.45 9.88 L23.90 1.4" fill="none" stroke="#15274a" stroke-width="1.15" stroke-linejoin='round'/><path d="M0.8 0.8h3.2l-3.2 2.6z M24.10 0.8h-3.2l3.2 2.6z" fill="#15274a"/></svg>
<svg style="position:absolute;left:1462.00px;top:872.00px;overflow:visible" width="25.10" height="22.90" viewBox="0 0 25.4 22.6" preserveAspectRatio="none" ><path d="M17.1 0.7 L24.7 8.6 L12.9 21.3 L5.3 13.2 Z" fill="none" stroke="#15274a" stroke-width="1.3" stroke-linejoin='round'/><path d="M17.6 4.6 L9.0 13.6 M20.6 7.8 L12.0 16.9" fill="none" stroke="#15274a" stroke-width="1.2" /><path d="M5.0 13.0 L12.9 21.6 L5.0 21.6 Z" fill="#15274a"/><path d="M0.3 21.6 H13.2" fill="none" stroke="#15274a" stroke-width="1.7" stroke-linecap='round'/></svg>
<svg style="position:absolute;left:1499.60px;top:870.30px;overflow:visible" width="22.10" height="24.90" viewBox="0 0 22 24" preserveAspectRatio="none" ><path d="M2.3 2.4 L19.7 21.6 M19.7 2.4 L2.3 21.6" fill="none" stroke="#15274a" stroke-width="6.2" /></svg>
<svg style="position:absolute;left:140.00px;top:246.00px;overflow:visible" width="63.00" height="59.00" viewBox="140 246 63 59" preserveAspectRatio="none" ><path d="M146.2 269.6 H173.6 V253.0 L198.2 275.4 L173.6 298.4 V282 H146.2 Z" fill="#fff" stroke="#fff" stroke-width="6.4" stroke-linejoin="round"/><path d="M146.2 269.6 H173.6 V253.0 L198.2 275.4 L173.6 298.4 V282 H146.2 Z" fill="#253b5c" stroke="#253b5c" stroke-width="2.2" stroke-linejoin="round"/></svg>
<svg style="position:absolute;left:331.00px;top:279.20px;overflow:visible" width="65.00" height="57.00" viewBox="331 280 65 57" preserveAspectRatio="none" ><path d="M389 303 H361 V286.6 L337 308.4 L361 330.4 V313.8 H389 Z" fill="#fff" stroke="#fff" stroke-width="6.6" stroke-linejoin="round"/><path d="M389 303 H361 V286.6 L337 308.4 L361 330.4 V313.8 H389 Z" fill="#253b5c" stroke="#253b5c" stroke-width="2.4" stroke-linejoin="round"/></svg>
<svg style="position:absolute;left:1482.00px;top:334.00px;overflow:visible" width="58.00" height="64.00" viewBox="1482 334 58 64" preserveAspectRatio="none" ><path d="M1505.6 340 H1515.8 V368.6 H1533.6 L1511 391.6 L1488.6 368.6 H1505.6 Z" fill="#fff" stroke="#fff" stroke-width="6.6" stroke-linejoin="round"/><path d="M1505.6 340 H1515.8 V368.6 H1533.6 L1511 391.6 L1488.6 368.6 H1505.6 Z" fill="#253b5c" stroke="#253b5c" stroke-width="2.4" stroke-linejoin="round"/></svg>
</div></div>
</body></html>
